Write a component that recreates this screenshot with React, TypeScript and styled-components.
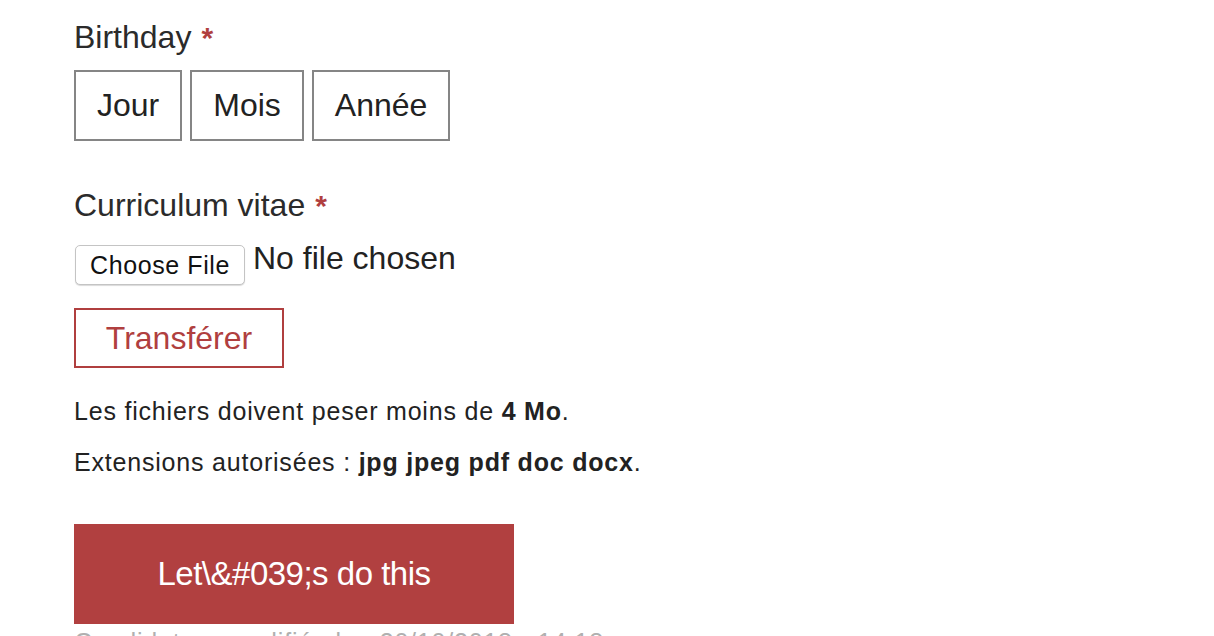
import React from 'react';
import styled, { createGlobalStyle } from 'styled-components';

const GlobalStyle = createGlobalStyle`
  html, body {
    margin: 0;
    padding: 0;
    background: #ffffff;
  }
  body {
    font-family: 'Liberation Sans', Arial, sans-serif;
    color: #2b2b2b;
  }
`;

const Form = styled.form`
  padding: 17px 0 0 74px;
  width: 800px;
`;

const Field = styled.div<{ gap?: number }>`
  margin-bottom: ${props => props.gap ?? 0}px;
`;

const Label = styled.label`
  display: block;
  font-size: 32px;
  line-height: 40px;
  height: 40px;
  color: #2b2b2b;
  margin-bottom: 13px;
`;

const Required = styled.span`
  color: #b03f3f;
  font-size: 30px;
  font-weight: 700;
  line-height: 0;
  margin-left: 10px;
`;

const SelectRow = styled.div`
  display: flex;
  gap: 8px;
`;

const SelectBox = styled.div`
  box-sizing: border-box;
  height: 71px;
  padding: 0 21px;
  border: 2px solid #858585;
  display: flex;
  align-items: center;
  font-size: 32px;
  color: #222;
`;

const FileRow = styled.div`
  display: flex;
  align-items: flex-start;
  gap: 8px;
  margin-top: 17px;
`;

const ChooseButton = styled.span`
  box-sizing: border-box;
  height: 40px;
  margin: 3px 0 0 1px;
  padding: 0 14px;
  display: flex;
  align-items: center;
  border: 1px solid #c4c4c4;
  border-radius: 5px;
  background: #ffffff;
  box-shadow: 0 1px 1px rgba(0, 0, 0, 0.15);
  font-size: 25px;
  letter-spacing: 0.6px;
  color: #111;
`;

const NoFile = styled.span`
  font-size: 32px;
  line-height: 32px;
  color: #222;
`;

const OutlineButton = styled.button`
  box-sizing: border-box;
  display: block;
  margin-top: 23px;
  height: 60px;
  width: 210px;
  border: 2px solid #b03f3f;
  background: #fff;
  color: #b03f3f;
  font-family: inherit;
  font-size: 32px;
  cursor: pointer;
`;

const Note = styled.p<{ first?: boolean }>`
  margin: ${props => (props.first ? '18px' : '0')} 0 0;
  font-size: 25px;
  letter-spacing: 0.8px;
  line-height: 51px;
  color: #222;

  b {
    font-weight: 700;
  }
`;

const SubmitButton = styled.button`
  display: block;
  margin-top: 36px;
  width: 440px;
  height: 100px;
  border: none;
  background: #b14040;
  color: #fff;
  font-family: inherit;
  font-size: 33px;
  letter-spacing: -0.5px;
  cursor: pointer;
`;

const Footnote = styled.p`
  margin: 4px 0 0;
  font-size: 25px;
  letter-spacing: 0.8px;
  color: #b0b0b0;
`;

const App: React.FC = () => {
  return (
    <>
      <GlobalStyle />
      <Form onSubmit={e => e.preventDefault()}>
        <Field gap={44}>
          <Label>
            Birthday<Required>*</Required>
          </Label>
          <SelectRow>
            <SelectBox>Jour</SelectBox>
            <SelectBox>Mois</SelectBox>
            <SelectBox>Année</SelectBox>
          </SelectRow>
        </Field>

        <Field>
          <Label>
            Curriculum vitae<Required>*</Required>
          </Label>
          <FileRow>
            <ChooseButton>Choose File</ChooseButton>
            <NoFile>No file chosen</NoFile>
          </FileRow>
          <OutlineButton type="button">Transférer</OutlineButton>
        </Field>

        <Note first>
          Les fichiers doivent peser moins de <b>4 Mo</b>.
        </Note>
        <Note>
          Extensions autorisées : <b>jpg jpeg pdf doc docx</b>.
        </Note>

        <SubmitButton type="submit">Let\&amp;#039;s do this</SubmitButton>
        <Footnote>Candidature modifiée le : 30/10/2018 - 14:18</Footnote>
      </Form>
    </>
  );
};

export default App;
